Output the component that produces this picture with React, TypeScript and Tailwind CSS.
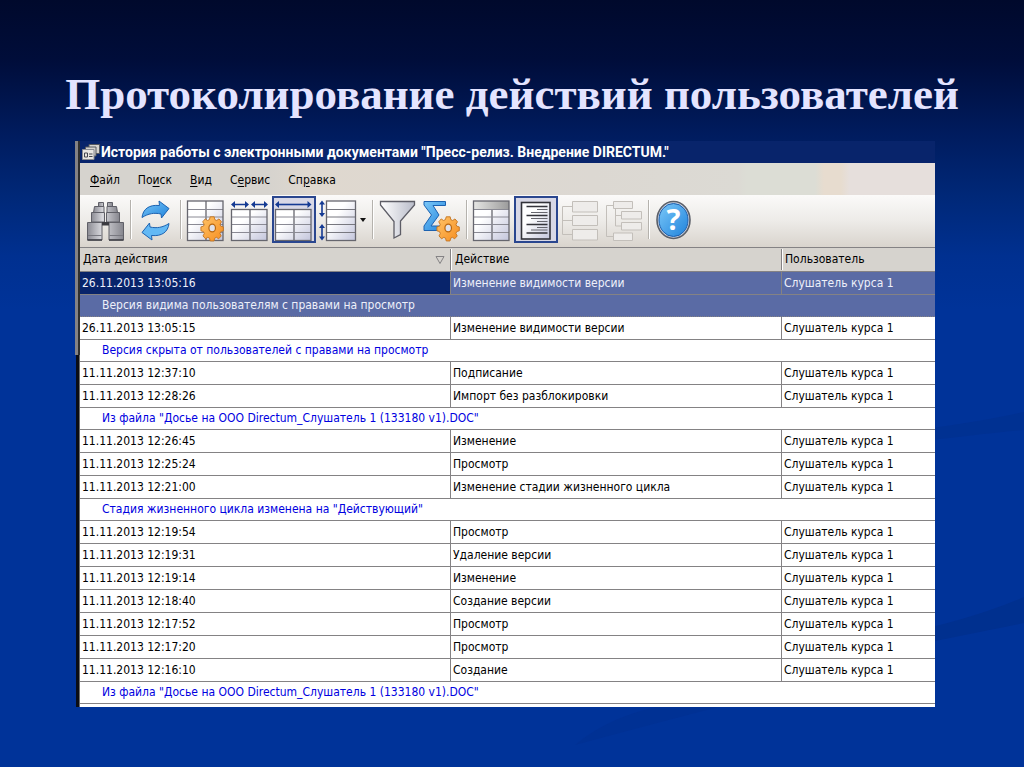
import React from "react";
import clsx from "clsx";

type Entry = { date: string; action: string; note?: string; selected?: boolean };

const USER = "Слушатель курса 1";

const entries: Entry[] = [
    { date: "26.11.2013 13:05:16", action: "Изменение видимости версии", note: "Версия видима пользователям с правами на просмотр", selected: true },
    { date: "26.11.2013 13:05:15", action: "Изменение видимости версии", note: "Версия скрыта от пользователей с правами на просмотр" },
    { date: "11.11.2013 12:37:10", action: "Подписание" },
    { date: "11.11.2013 12:28:26", action: "Импорт без разблокировки", note: 'Из файла "Досье на ООО Directum_Слушатель 1 (133180 v1).DOC"' },
    { date: "11.11.2013 12:26:45", action: "Изменение" },
    { date: "11.11.2013 12:25:24", action: "Просмотр" },
    { date: "11.11.2013 12:21:00", action: "Изменение стадии жизненного цикла", note: 'Стадия жизненного цикла изменена на "Действующий"' },
    { date: "11.11.2013 12:19:54", action: "Просмотр" },
    { date: "11.11.2013 12:19:31", action: "Удаление версии" },
    { date: "11.11.2013 12:19:14", action: "Изменение" },
    { date: "11.11.2013 12:18:40", action: "Создание версии" },
    { date: "11.11.2013 12:17:52", action: "Просмотр" },
    { date: "11.11.2013 12:17:20", action: "Просмотр" },
    { date: "11.11.2013 12:16:10", action: "Создание", note: 'Из файла "Досье на ООО Directum_Слушатель 1 (133180 v1).DOC"' },
];

// before / underlined letter / after
const menu = [
    ["", "Ф", "айл"],
    ["По", "и", "ск"],
    ["", "В", "ид"],
    ["С", "е", "рвис"],
    ["Сп", "р", "авка"],
];

/* ---------- Icons ---------- */

function Icon({ children }: { children: React.ReactNode }) {
    return (
        <svg viewBox="0 0 44 47" className="w-11 h-[47px] block" fill="none">
            {children}
        </svg>
    );
}

function Defs() {
    return (
        <svg className="absolute w-0 h-0" aria-hidden="true">
            <defs>
                <linearGradient id="metal" x1="0" x2="1" y1="0" y2="0">
                    <stop offset="0" stopColor="#8b8b93" />
                    <stop offset="0.4" stopColor="#d9d9de" />
                    <stop offset="1" stopColor="#85858d" />
                </linearGradient>
                <linearGradient id="sheet" x1="0" x2="1" y1="0" y2="1">
                    <stop offset="0.35" stopColor="#ffffff" />
                    <stop offset="1" stopColor="#c3c5dc" />
                </linearGradient>
                <linearGradient id="head" x1="0" x2="1" y1="0" y2="0">
                    <stop offset="0" stopColor="#e6e6e4" />
                    <stop offset="1" stopColor="#9b9b9b" />
                </linearGradient>
                <linearGradient id="blue" x1="0" x2="1" y1="0" y2="1">
                    <stop offset="0" stopColor="#7cc8f8" />
                    <stop offset="1" stopColor="#1f83dc" />
                </linearGradient>
                <linearGradient id="orange" x1="0" x2="1" y1="0" y2="1">
                    <stop offset="0" stopColor="#ffc469" />
                    <stop offset="1" stopColor="#f68d1f" />
                </linearGradient>
                <linearGradient id="funnel" x1="0" x2="1" y1="0" y2="0">
                    <stop offset="0" stopColor="#ffffff" />
                    <stop offset="1" stopColor="#b9bcc9" />
                </linearGradient>
            </defs>
        </svg>
    );
}

function Gear() {
    return (
        <g transform="translate(28.2 31.2) scale(0.86 0.93)">
            <path
                d="M-2.3-11.2h4.6l.7 3 2.2 1 2.7-1.7 2.9 3.1-1.7 2.7.8 2 3 .8v4.2l-3 .8-.9 2.1 1.5 2.6-3 3.1-2.6-1.6-2 .9-.8 3h-4.4l-.8-3-2-.9-2.6 1.6-3-3.1 1.5-2.6-.9-2.1-3-.8v-4.2l3-.8.8-2-1.7-2.7 2.9-3.1 2.7 1.7 2.2-1z"
                fill="url(#orange)"
                stroke="#c4731f"
            />
            <ellipse rx="3.8" ry="4.2" cy=".8" fill="#dfe1ea" stroke="#b8660f" strokeWidth="1.4" />
        </g>
    );
}

function Grid({ top = 5, header = false }: { top?: number; header?: boolean }) {
    return (
        <g>
            <rect x="3.5" y={top} width="35.5" height={44.5 - top} fill="url(#sheet)" />
            {header && <rect x="3.5" y="5" width="35.5" height="8.5" fill="url(#head)" />}
            <path d={top > 10 || header ? "M22 13.5v31" : "M22 5v39.5"} stroke="#66666e" strokeWidth="1.3" />
            <path d="M3.5 13.5h35.5M3.5 21h35.5M3.5 28.5h35.5M3.5 36.5h35.5" stroke="#8a8a94" />
            <rect x="3.5" y={top} width="35.5" height={44.5 - top} stroke="#66666e" strokeWidth="1.3" />
        </g>
    );
}

const Binoculars = () => (
    <Icon>
        <g stroke="#606068" fill="url(#metal)">
            <path d="M14.5 6.5h5v4h-5zM23.5 6.5h5v4h-5z" />
            <path d="M10.5 10.5h9.5v6h-10.5zM23 10.5h9.5l1 6h-10.5z" />
            <path d="M7.5 16.5h13v9.5h-13zM22.5 16.5h13v9.5h-13z" />
            <path d="M3.5 26.5h14.5v17.5h-14.5zM25 26.5h14.5v17.5h-14.5z" />
        </g>
        <path d="M18 26h7v3.5h-7z" fill="#3c3c42" />
        <path d="M4 39.5h13.5M25.5 39.5h13.5" stroke="#77777f" />
        <path d="M3.5 44h14.5M25 44h14.5" stroke="#3f3f45" strokeWidth="1.5" />
    </Icon>
);

const arrowPath = "M8 21.5C9 13 15 8.500 25.5 9.500L25 5l10 7.5-7.5 9.5-.5-4C20 16.500 14.5 17.5 8 21.5z";

const Refresh = () => (
    <Icon>
        <path d={arrowPath} fill="url(#blue)" stroke="#1c62b0" strokeLinejoin="round" />
        <path d={arrowPath} transform="rotate(180 21.5 24.5)" fill="#63b9f5" stroke="#1c62b0" strokeLinejoin="round" />
    </Icon>
);

const GridSettings = () => (
    <Icon>
        <Grid />
        <Gear />
    </Icon>
);

const navy = "#143a93";

const ColumnsAuto = () => (
    <Icon>
        <Grid top={13.5} />
        <path d="M5 8.5h14M25 8.5h13" stroke={navy} strokeWidth="1.6" />
        <path d="M3 8.5l4-3.5v7zM21 8.5l-4-3.5v7zM23 8.5l4-3.5v7zM40 8.5l-4-3.5v7z" fill={navy} />
    </Icon>
);

const ColumnsFit = () => (
    <Icon>
        <Grid top={13.5} />
        <path d="M5 8.5h32" stroke={navy} strokeWidth="1.6" />
        <path d="M3 8.5l4-3.5v7zM39.5 8.5l-4-3.5v7z" fill={navy} />
    </Icon>
);

const RowHeight = () => (
    <Icon>
        <rect x="10.5" y="5" width="29" height="39.5" fill="url(#sheet)" />
        <path d="M10.5 13.5h29M10.5 21h29M10.5 28.5h29M10.5 36.5h29" stroke="#77777f" />
        <rect x="10.5" y="5" width="29" height="39.5" stroke="#66666e" strokeWidth="1.3" />
        <path d="M6 7v12M6 30v12" stroke={navy} strokeWidth="1.6" />
        <path d="M6 4.5l-3 4h6zM6 21l-3-4h6zM6 28l-3 4h6zM6 44.5l-3-4h6z" fill={navy} />
    </Icon>
);

const Funnel = () => (
    <Icon>
        <path d="M4.5 5.5h34v3.5L24.5 25v13.5l-6.5 3.5V25.5L4.5 9z" fill="url(#funnel)" stroke="#5d5d66" strokeWidth="1.3" />
    </Icon>
);

const Sigma = () => (
    <Icon>
        <path d="M4 5.5h21.5v4H13l6 9.5-8 11h9v4.5H4v-4.5l7.5-11L4 9z" fill="url(#blue)" stroke="#1c62b0" />
        <Gear />
    </Icon>
);

const TableView = () => (
    <Icon>
        <Grid header />
    </Icon>
);

const NotesView = () => (
    <Icon>
        <rect x="7.5" y="6.5" width="28.5" height="36.5" fill="url(#sheet)" stroke="#33333a" strokeWidth="1.6" />
        <path d="M12.5 10.5h21M12.5 19.5h21M12.5 28.5h21M12.5 37h21" stroke="#33333a" strokeWidth="1.5" />
        <path d="M23 13.5h10.5M17 16.5h16.5M17 22.5h16.5M23 25.5h10.5M23 31.5h10.5M17 34h16.5" stroke="#66666e" />
    </Icon>
);

const TreeFlat = () => (
    <Icon>
        <path d="M14 10.5H4.5v28H14M4.5 24.5H14" stroke="#c3bfba" />
        <g fill="#eeecea" stroke="#c3bfba">
            <path d="M14.5 5.5h25v10.5h-25zM14.5 19.5h25v10h-25zM14.5 33.5h25v10.5h-25z" />
        </g>
    </Icon>
);

const TreeNested = () => (
    <Icon>
        <path d="M11 9.5H4.5v31H11M13.5 12.5v17.5H19M13.5 19.5H19" stroke="#c3bfba" />
        <g fill="#eeecea" stroke="#c3bfba">
            <path d="M11.5 5.5h19v7h-19zM19.5 15.5h20v7.5h-20zM19.5 26.5h20v7.5h-20zM11.5 37h19v7.5h-19z" />
        </g>
    </Icon>
);

const Help = () => (
    <Icon>
        <ellipse cx="21.5" cy="24" rx="16.5" ry="18.5" fill="#c9d3e2" stroke="#5b5f68" strokeWidth="1.6" />
        <ellipse cx="21.5" cy="24" rx="14.5" ry="16.5" fill="url(#blue)" stroke="#1d5fae" />
        <text x="21.5" y="34" textAnchor="middle" fontSize="29" fontWeight="700" fontFamily="Noto Sans, sans-serif" fill="#fff">
            ?
        </text>
    </Icon>
);

/* ---------- Toolbar ---------- */

function ToolButton({ label, pressed, children }: { label: string; pressed?: boolean; children: React.ReactNode }) {
    return (
        <button
            aria-label={label}
            aria-pressed={pressed}
            className={clsx("shrink-0", pressed && "bg-[#d8d8e6] outline-2 -outline-offset-2 outline-[#2a468f]")}
        >
            {children}
        </button>
    );
}

function Separator() {
    return (
        <div className="w-[6px] shrink-0 py-1 flex justify-center">
            <div className="w-[2px] bg-[#b5b2ad] border-r border-white" />
        </div>
    );
}

function Toolbar() {
    return (
        <div className="flex pl-1 pt-px pb-1 bg-linear-to-b from-[#fbfaf9] via-[#edebe8] to-[#d9d4cd] border-b border-[#848284]">
            <ToolButton label="Найти"><Binoculars /></ToolButton>
            <Separator />
            <ToolButton label="Обновить"><Refresh /></ToolButton>
            <Separator />
            <ToolButton label="Настройка таблицы"><GridSettings /></ToolButton>
            <ToolButton label="Ширина столбцов"><ColumnsAuto /></ToolButton>
            <ToolButton label="По ширине окна" pressed><ColumnsFit /></ToolButton>
            <ToolButton label="Высота строк"><RowHeight /></ToolButton>
            <button aria-label="Выбрать высоту строк" className="w-[10px] shrink-0 flex items-center">
                <svg viewBox="0 0 7 4" className="w-[7px] h-1"><path d="M0 0h6L3 4z" fill="#111" /></svg>
            </button>
            <Separator />
            <ToolButton label="Фильтр"><Funnel /></ToolButton>
            <ToolButton label="Итоги"><Sigma /></ToolButton>
            <Separator />
            <ToolButton label="Таблица"><TableView /></ToolButton>
            <ToolButton label="Примечания" pressed><NotesView /></ToolButton>
            <ToolButton label="Список"><TreeFlat /></ToolButton>
            <ToolButton label="Дерево"><TreeNested /></ToolButton>
            <Separator />
            <ToolButton label="Помощь"><Help /></ToolButton>
        </div>
    );
}

/* ---------- History table ---------- */

function HistoryTable() {
    return (
        <table className="w-full table-fixed border-separate border-spacing-0 bg-white text-black whitespace-nowrap">
            <colgroup>
                <col className="w-[371px]" />
                <col className="w-[331px]" />
                <col />
            </colgroup>
            <thead>
                <tr className="h-6 bg-[#d6d3ce] text-left">
                    <th className="p-0 pl-[3px] border-b border-[#848284] font-normal">
                        <div className="flex items-center justify-between pr-[5px] border-r border-[#848284]">
                            Дата действия
                            <svg viewBox="0 0 10 10" className="w-[10px] h-[10px]" fill="none">
                                <path d="M1 1.5h8L5 8.5z" stroke="#848284" />
                            </svg>
                        </div>
                    </th>
                    <th className="p-0 border-b border-[#848284] font-normal">
                        <div className="pl-[3px] border-l border-l-white border-r border-r-[#848284]">Действие</div>
                    </th>
                    <th className="p-0 border-b border-[#848284] font-normal">
                        <div className="pl-[2px] border-l border-white">Пользователь</div>
                    </th>
                </tr>
            </thead>
            <tbody>
                {entries.map((e) => (
                    <React.Fragment key={e.date}>
                        <tr className={clsx("h-[23px]", e.selected && "bg-[#5a6ba5] text-[#eef0fa]")}>
                            <td className={clsx("p-0 pl-[2px] border-b border-r border-[#848284]", e.selected && "bg-[#08246b]")}>{e.date}</td>
                            <td className="p-0 pl-[2px] border-b border-r border-[#848284]">{e.action}</td>
                            <td className="p-0 pl-[2px] border-b border-[#848284]">{USER}</td>
                        </tr>
                        {e.note && (
                            <tr className={clsx("h-[22px]", e.selected ? "bg-[#5a6ba5] text-[#eef0fa]" : "text-[#0000e0]")}>
                                <td colSpan={3} className={clsx("p-0 pl-[22px] border-b border-[#848284]", e.selected && "border-dotted")}>
                                    {e.note}
                                </td>
                            </tr>
                        )}
                    </React.Fragment>
                ))}
            </tbody>
        </table>
    );
}

export default function App() {
    return (
        <div className="relative min-h-screen overflow-hidden bg-[linear-gradient(to_bottom,#00092c_0px,#000d3a_60px,#001c5f_136px,#002878_196px,#003090_256px,#003399_310px)] pb-[60px]">
            <Defs />
            {/* Faint waves on the slide background */}
            <svg viewBox="0 0 1024 767" preserveAspectRatio="none" className="absolute inset-0 w-full h-full" aria-hidden="true">
                <path d="M900 432Q970 424 1024 412V430Q980 434 900 444z" fill="#003192" />
                <path d="M900 634Q970 620 1024 597V623Q990 630 900 648z" fill="#00308f" />
                <path d="M575 745Q610 715 670 704H730Q660 722 575 745z" fill="#003194" />
            </svg>

            <div className="relative">
                <h1 className="pt-[68px] pb-[21px] text-center whitespace-nowrap font-bold text-[45px] leading-[52px] text-[#e4e4ff] font-['Liberation_Serif',serif]">
                    Протоколирование действий пользователей
                </h1>

                <div className="flex pl-[75px] pr-[89px] font-['DejaVu_Sans_Condensed','DejaVu_Sans',sans-serif] text-[12px] leading-[21px]">
                    {/* Left window frame */}
                    <div className="w-[5px] shrink-0 flex flex-col">
                        <div className="h-[214px] bg-[#848284] border-r-2 border-[#30302f]" />
                        <div className="flex-1 ml-px bg-[#0b0d14] border-r border-[#6b6b6b]" />
                    </div>

                    <div className="flex-1 min-w-0 bg-white pb-[3px]">
                        <div className="h-[22px] flex items-center gap-[1px] bg-[#08246b] pl-[2px] text-white">
                            <svg viewBox="0 0 18 18" className="w-[18px] h-[18px] shrink-0" fill="none">
                                <path d="M7 1.5h10.5v9H7z" fill="#d6d3ce" stroke="#55585f" />
                                <path d="M3.5 4h10.5v9H3.5z" fill="#d6d3ce" stroke="#55585f" />
                                <path d="M.5 6.5h11.5v10H.5z" fill="#e8e6e2" stroke="#8a8c92" />
                                <path d="M2.5 10h3v4h-3zM7 11h3.5M7 13.5h3.5" stroke="#44474f" />
                            </svg>
                            <h2 className="font-['Roboto',sans-serif] font-bold text-[14px] whitespace-nowrap">
                                История работы с электронными документами "Пресс-релиз. Внедрение DIRECTUM."
                            </h2>
                        </div>

                        <nav className="h-8 flex items-center gap-[18px] pt-[2px] pl-[10px] bg-[linear-gradient(to_right,#d6d3ce_0%,#d6d3ce_22%,#dfd8cf_27%,#dcd8d2_60%,#dcdad4_77%,#dcddd5_78%,#dcddd5_86%,#e7dccf_87%,#e7dccf_89%,#e6dfdc_90%)]">
                            {menu.map(([before, key, after]) => (
                                <button key={before + key + after}>
                                    {before}
                                    <span className="underline underline-offset-2">{key}</span>
                                    {after}
                                </button>
                            ))}
                        </nav>

                        <Toolbar />
                        <HistoryTable />
                    </div>
                </div>
            </div>
        </div>
    );
}
